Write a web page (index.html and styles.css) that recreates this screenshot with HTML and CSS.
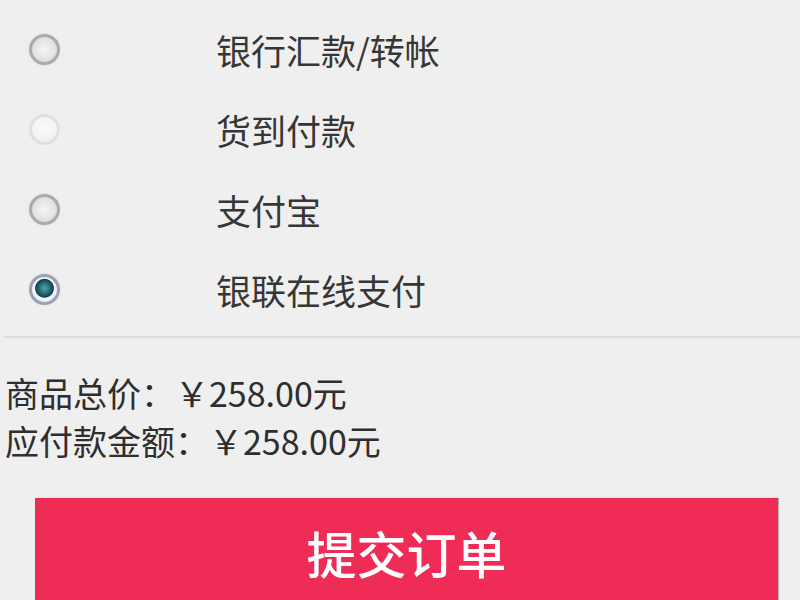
FILE: index.html
```html
<!DOCTYPE html>
<html lang="zh-CN">
<head>
<meta charset="utf-8">
<title>支付方式</title>
<link rel="stylesheet" href="styles.css">
</head>
<body>
<div class="page">
  <ul class="pay-list">
    <li class="pay-item"><span class="radio"></span><span class="pay-name">银行汇款/转帐</span></li>
    <li class="pay-item"><span class="radio disabled"></span><span class="pay-name">货到付款</span></li>
    <li class="pay-item"><span class="radio"></span><span class="pay-name">支付宝</span></li>
    <li class="pay-item"><span class="radio checked"></span><span class="pay-name">银联在线支付</span></li>
  </ul>
  <div class="summary">
    <p class="sum-line">商品总价：<span class="yen">￥</span>258.00元</p>
    <p class="sum-line">应付款金额：<span class="yen">￥</span>258.00元</p>
  </div>
  <div class="actions">
    <button class="submit" type="button">提交订单</button>
  </div>
</div>
</body>
</html>
```

FILE: styles.css
```css
html, body {
  margin: 0;
  padding: 0;
  background: #efefef;
}
body {
  font-family: "Noto Sans CJK SC", "Liberation Sans", sans-serif;
  color: #333;
  overflow: hidden;
}
.page {
  width: 800px;
  height: 600px;
}
.pay-list {
  list-style: none;
  margin: 0;
  padding: 9px 0 7px 0;
  border-bottom: 2px solid #dcdcdc;
  margin-left: 4px;
}
.pay-item {
  height: 80px;
  display: flex;
  align-items: center;
  padding-left: 25px;
}
.radio {
  box-sizing: border-box;
  width: 31px;
  height: 31px;
  border-radius: 50%;
  border: 3px solid #ababab;
  background: radial-gradient(circle at 50% 50%, #f6f6f6 0, #e2e2e2 60%, #d2d2d2 100%);
  box-shadow: 0 0 2px rgba(0,0,0,0.12);
  flex: none;
}
.radio.disabled {
  border-color: #e0e0e0;
  background: radial-gradient(circle at 50% 40%, #fafafa 0, #eeeeee 100%);
  box-shadow: none;
}
.radio.checked {
  border: 3px solid #9aa3b5;
  background: radial-gradient(circle at 50% 45%, #4fa3a8 0, #1f5f6a 35%, #123f4c 48%, #f3f6fa 53%, #dfe6ee 100%);
}
.pay-name {
  margin-left: 156px;
  font-size: 35px;
  line-height: 1;
  color: #363636;
}
.summary {
  padding: 31px 0 0 5px;
}
.sum-line {
  margin: 0;
  font-size: 34px;
  line-height: 48px;
  color: #2e2e2e;
}
.actions {
  padding: 33px 0 0 35px;
}
.submit {
  display: block;
  width: 743px;
  height: 110px;
  border: 0;
  background: #ee2c56;
  color: #fff;
  font-family: "Noto Sans CJK SC", sans-serif;
  font-size: 50px;
  font-weight: 500;
  padding: 0 0 2px 0;
  text-align: center;
  box-shadow: 1px 0 1px rgba(0,0,0,0.25);
}
```
